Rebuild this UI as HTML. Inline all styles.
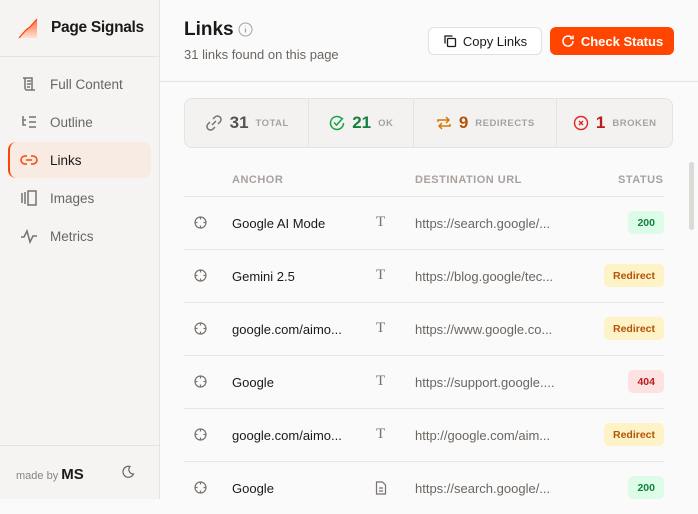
<!DOCTYPE html>
<html><head><meta charset="utf-8"><style>
*{box-sizing:border-box;margin:0;padding:0}
body{width:698px;height:499px;overflow:hidden;font-family:"Liberation Sans",sans-serif;background:#fafafa;position:relative;color:#1c1917}
.side{position:absolute;left:0;top:0;width:160px;height:499px;background:#f5f4f2;border-right:1px solid #e5e3e0}
.logo{height:57px;border-bottom:1px solid #e5e3e0;display:flex;align-items:center;padding-left:17px;font-weight:bold;font-size:15.5px;letter-spacing:-0.3px}
.nav{position:absolute;left:8px;width:143px;height:36px;display:flex;align-items:center;padding-left:12px;font-size:13.5px;color:#6b6560}
.nav svg{width:18px;height:18px;margin-right:12px;stroke:#78716c;fill:none;stroke-width:1.5}
.nav.act{background:#f7ebe4;border-radius:8px;color:#1c1917;border-left:2px solid #ff4500;padding-left:10px}
.nav.act svg{stroke:#ff4500}
.foot{position:absolute;left:0;top:445px;width:159px;height:54px;border-top:1px solid #e5e3e0;font-size:11px;color:#8a847e;padding:20px 0 0 16px}
.foot b{font-size:15px;color:#1c1917;margin-left:3px}
.main{position:absolute;left:160px;top:0;right:0}
.hdr{height:82px;border-bottom:1px solid #e5e3e0}
h1{position:absolute;left:24px;top:19px;font-size:19px;font-weight:bold}
.sub{position:absolute;left:24px;top:47px;font-size:13px;color:#6b6560}
.btn{position:absolute;top:27px;height:28px;border-radius:6px;font-size:13px;display:flex;align-items:center;justify-content:center}
.stats{position:absolute;left:24px;top:98px;width:489px;height:50px;border:1px solid #e5e3e0;border-radius:8px;background:#f3f2f0;display:flex}
.st{display:flex;align-items:center;justify-content:center;border-right:1px solid #e5e3e0;gap:7px}
.st:last-child{border:none}
.st b{font-size:17px}
.st span{font-size:9.5px;font-weight:bold;color:#a8a29e;letter-spacing:.5px}
.th{position:absolute;top:174px;font-size:11px;font-weight:bold;color:#a8a29e;letter-spacing:.5px}
.row{position:absolute;left:24px;width:480px;height:53px;border-top:1px solid #e8e6e3;font-size:13px}
.row>*{position:absolute;top:19px}
.url{left:231px;color:#6b6560}
.bd{right:0;top:14px!important;height:23px;border-radius:5px;font-size:10.5px;font-weight:bold;display:flex;align-items:center;padding:0 9px}
.ok{background:#dcfce7;color:#15803d}.rd{background:#fef3c7;color:#b45309}.er{background:#fee2e2;color:#b91c1c}
</style></head><body>
<div class="side">
<div class="logo"><svg width="22" height="22" viewBox="0 0 22 22" style="margin-right:12px"><defs><linearGradient id="g" x1="0" y1="0" x2="0" y2="1"><stop offset="0" stop-color="#ff6a3a"/><stop offset="1" stop-color="#ffe2d6"/></linearGradient></defs><path d="M2 21 L9 13 L13 10 L20 2 L20 21Z" fill="url(#g)"/><path d="M2 21 L9 13 L13 10 L20 2" stroke="#ff4500" stroke-width="1.2" fill="none"/></svg>Page Signals</div>
<div class="nav" style="top:66px"><svg viewBox="0 0 18 18"><path d="M3 3h9v12h3M5 3v10a2 2 0 0 0 2 2h8M7 6h4M7 9h4M7 12h3"/></svg>Full Content</div>
<div class="nav" style="top:104px"><svg viewBox="0 0 18 18"><path d="M3 3v9h3M3 7h3M9 4h7M9 9h7M9 14h7"/></svg>Outline</div>
<div class="nav act" style="top:142px"><svg viewBox="0 0 18 18"><path d="M7 5H5a4 4 0 0 0 0 8h2M11 5h2a4 4 0 0 1 0 8h-2M6 9h6"/></svg>Links</div>
<div class="nav" style="top:180px"><svg viewBox="0 0 18 18"><path d="M2 4v10M5 3v12M8 2h8v14H8z"/></svg>Images</div>
<div class="nav" style="top:218px"><svg viewBox="0 0 18 18"><path d="M1 10h3l3-6 3 11 3-6h4"/></svg>Metrics</div>
<div class="foot">made by<b>MS</b><svg style="position:absolute;left:121px;top:19px" width="14" height="14" viewBox="0 0 14 14"><path d="M9 1.5A5.5 5.5 0 1 0 12.5 9 4.5 4.5 0 0 1 9 1.5z" fill="none" stroke="#6b6560" stroke-width="1.2"/></svg></div>
</div>
<div class="main">
<div class="hdr"></div>
<h1>Links</h1>
<svg style="position:absolute;left:78px;top:22px" width="15" height="15" viewBox="0 0 15 15"><circle cx="7.5" cy="7.5" r="6.5" fill="none" stroke="#a8a29e"/><path d="M7.5 6.5v4M7.5 4.3v.5" stroke="#a8a29e" stroke-width="1.2"/></svg>
<div class="sub">31 links found on this page</div>
<div class="btn" style="left:268px;width:114px;border:1px solid #e2e0dd;background:#fff"><svg width="14" height="14" viewBox="0 0 14 14" style="margin-right:6px" fill="none" stroke="#1c1917" stroke-width="1.3"><rect x="4.5" y="4.5" width="8" height="8" rx="1"/><path d="M2 9.5V2h7.5"/></svg>Copy Links</div>
<div class="btn" style="left:390px;width:124px;background:#ff4500;color:#fff;font-weight:bold"><svg width="14" height="14" viewBox="0 0 14 14" style="margin-right:6px" fill="none" stroke="#fff" stroke-width="1.5"><path d="M12 7a5 5 0 1 1-1.5-3.5M12 1.5v3h-3"/></svg>Check Status</div>
<div class="stats">
<div class="st" style="width:125px"><svg width="18" height="18" viewBox="0 0 18 18" fill="none" stroke="#78716c" stroke-width="1.5"><path d="M8 5l2-2a3 3 0 0 1 5 5l-2 2M10 13l-2 2a3 3 0 0 1-5-5l2-2M7 11l4-4"/></svg><b style="color:#57534e">31</b><span>TOTAL</span></div>
<div class="st" style="width:105px"><svg width="16" height="16" viewBox="0 0 16 16" fill="none" stroke="#16a34a" stroke-width="1.5"><path d="M14.5 8a6.5 6.5 0 1 1-2-4.7"/><path d="M5 7.5l2.5 2.5L14 3"/></svg><b style="color:#15803d">21</b><span>OK</span></div>
<div class="st" style="width:144px"><svg width="16" height="16" viewBox="0 0 16 16" fill="none" stroke="#d97706" stroke-width="1.5"><path d="M2 7V5h11M10 2l3 3-3 3M14 9v2H3M6 14l-3-3 3-3"/></svg><b style="color:#b45309">9</b><span>REDIRECTS</span></div>
<div class="st" style="width:115px"><svg width="16" height="16" viewBox="0 0 16 16" fill="none" stroke="#dc2626" stroke-width="1.4"><circle cx="8" cy="8" r="6.5"/><path d="M6 6l4 4M10 6l-4 4"/></svg><b style="color:#b91c1c">1</b><span>BROKEN</span></div>
</div>
<div class="th" style="left:72px">ANCHOR</div>
<div class="th" style="left:255px">DESTINATION URL</div>
<div class="th" style="left:458px">STATUS</div>
<div style="position:absolute;left:529px;top:162px;width:5px;height:68px;border-radius:3px;background:#dcdad7"></div>
<div class="row" style="top:196px"><i style="left:10px"><svg width="13" height="13" viewBox="0 0 13 13" fill="none" stroke="#78716c" stroke-width="1.2"><circle cx="6.5" cy="6.5" r="5.5"/><path d="M6.5 1v2.5M6.5 9.5V12M1 6.5h2.5M9.5 6.5H12"/></svg></i><span style="left:48px">Google AI Mode</span><span style="left:192px;color:#78716c;font-family:'Liberation Serif',serif;font-size:15px;top:17px">T</span><span class="url">https://search.google/...</span><span class="bd ok">200</span></div>
<div class="row" style="top:249px"><i style="left:10px"><svg width="13" height="13" viewBox="0 0 13 13" fill="none" stroke="#78716c" stroke-width="1.2"><circle cx="6.5" cy="6.5" r="5.5"/><path d="M6.5 1v2.5M6.5 9.5V12M1 6.5h2.5M9.5 6.5H12"/></svg></i><span style="left:48px">Gemini 2.5</span><span style="left:192px;color:#78716c;font-family:'Liberation Serif',serif;font-size:15px;top:17px">T</span><span class="url">https://blog.google/tec...</span><span class="bd rd">Redirect</span></div>
<div class="row" style="top:302px"><i style="left:10px"><svg width="13" height="13" viewBox="0 0 13 13" fill="none" stroke="#78716c" stroke-width="1.2"><circle cx="6.5" cy="6.5" r="5.5"/><path d="M6.5 1v2.5M6.5 9.5V12M1 6.5h2.5M9.5 6.5H12"/></svg></i><span style="left:48px">google.com/aimo...</span><span style="left:192px;color:#78716c;font-family:'Liberation Serif',serif;font-size:15px;top:17px">T</span><span class="url">https://www.google.co...</span><span class="bd rd">Redirect</span></div>
<div class="row" style="top:355px"><i style="left:10px"><svg width="13" height="13" viewBox="0 0 13 13" fill="none" stroke="#78716c" stroke-width="1.2"><circle cx="6.5" cy="6.5" r="5.5"/><path d="M6.5 1v2.5M6.5 9.5V12M1 6.5h2.5M9.5 6.5H12"/></svg></i><span style="left:48px">Google</span><span style="left:192px;color:#78716c;font-family:'Liberation Serif',serif;font-size:15px;top:17px">T</span><span class="url">https://support.google....</span><span class="bd er">404</span></div>
<div class="row" style="top:408px"><i style="left:10px"><svg width="13" height="13" viewBox="0 0 13 13" fill="none" stroke="#78716c" stroke-width="1.2"><circle cx="6.5" cy="6.5" r="5.5"/><path d="M6.5 1v2.5M6.5 9.5V12M1 6.5h2.5M9.5 6.5H12"/></svg></i><span style="left:48px">google.com/aimo...</span><span style="left:192px;color:#78716c;font-family:'Liberation Serif',serif;font-size:15px;top:17px">T</span><span class="url">http://google.com/aim...</span><span class="bd rd">Redirect</span></div>
<div class="row" style="top:461px"><i style="left:10px"><svg width="13" height="13" viewBox="0 0 13 13" fill="none" stroke="#78716c" stroke-width="1.2"><circle cx="6.5" cy="6.5" r="5.5"/><path d="M6.5 1v2.5M6.5 9.5V12M1 6.5h2.5M9.5 6.5H12"/></svg></i><span style="left:48px">Google</span><i style="left:191px"><svg width="12" height="14" viewBox="0 0 12 14" fill="none" stroke="#78716c" stroke-width="1.2"><path d="M1.5 1h6l3 3v9h-9zM4 7h4M4 10h4"/></svg></i><span class="url">https://search.google/...</span><span class="bd ok">200</span></div>
</div>
</body></html>
